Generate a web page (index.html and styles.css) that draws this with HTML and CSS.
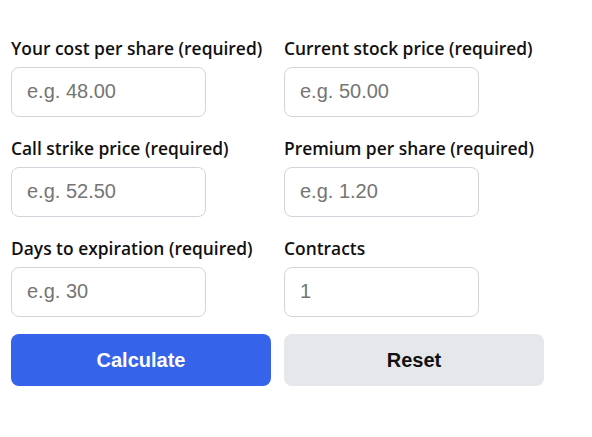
FILE: index.html
```html
<!DOCTYPE html>
<html>
<head>
<meta charset="utf-8">
<link rel="stylesheet" href="styles.css">
</head>
<body>
<form class="calc">
  <div class="grid">
    <div class="field">
      <label class="label">Your cost per share (required)</label>
      <input class="input" type="text" placeholder="e.g. 48.00">
    </div>
    <div class="field">
      <label class="label">Current stock price (required)</label>
      <input class="input" type="text" placeholder="e.g. 50.00">
    </div>
    <div class="field">
      <label class="label">Call strike price (required)</label>
      <input class="input" type="text" placeholder="e.g. 52.50">
    </div>
    <div class="field">
      <label class="label">Premium per share (required)</label>
      <input class="input" type="text" placeholder="e.g. 1.20">
    </div>
    <div class="field">
      <label class="label">Days to expiration (required)</label>
      <input class="input" type="text" placeholder="e.g. 30">
    </div>
    <div class="field">
      <label class="label">Contracts</label>
      <input class="input" type="text" placeholder="1">
    </div>
  </div>
  <div class="actions">
    <button type="button" class="btn btn-primary">Calculate</button>
    <button type="button" class="btn btn-secondary">Reset</button>
  </div>
</form>
</body>
</html>
```
FILE: styles.css
```css
html, body {
  margin: 0;
  padding: 0;
  background: #ffffff;
}
body {
  padding: 36px 0 0 11px;
}
.calc {
  width: 533px;
}
.grid {
  display: grid;
  grid-template-columns: 260px 260px;
  column-gap: 13px;
  row-gap: 19px;
}
.field {
  display: flex;
  flex-direction: column;
  gap: 7px;
}
.label {
  font-family: "Open Sans", "Noto Sans", sans-serif;
  font-weight: 600;
  font-size: 17.4px;
  line-height: 24px;
  color: #111111;
  white-space: nowrap;
}
.input {
  box-sizing: border-box;
  width: 195px;
  height: 50px;
  border: 1px solid #d1d5db;
  border-radius: 8px;
  padding: 0 15px 2px;
  font-family: "Liberation Sans", Arial, sans-serif;
  font-size: 20px;
  color: #111;
  background: #fff;
  outline: none;
}
.input::placeholder {
  color: #757575;
}
.actions {
  display: grid;
  grid-template-columns: 260px 260px;
  column-gap: 13px;
  margin-top: 17px;
}
.btn {
  height: 52px;
  border: none;
  border-radius: 8px;
  font-family: "Liberation Sans", Arial, sans-serif;
  font-weight: 700;
  font-size: 20px;
  cursor: pointer;
}
.btn-primary {
  background: #3563e9;
  color: #ffffff;
}
.btn-secondary {
  background: #e5e7eb;
  color: #111111;
}
```
